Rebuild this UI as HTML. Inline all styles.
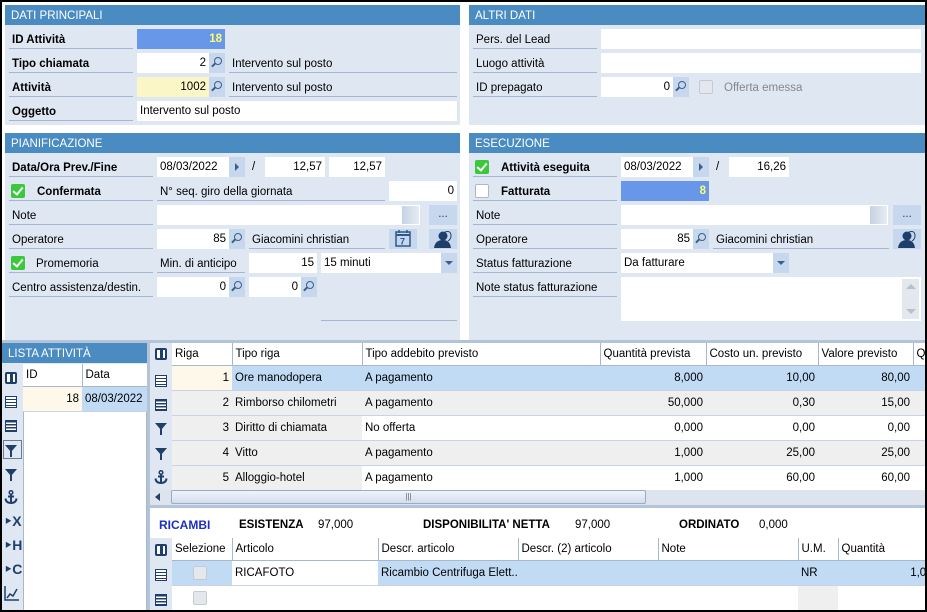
<!DOCTYPE html>
<html><head><meta charset="utf-8"><style>
*{box-sizing:border-box;margin:0;padding:0}
body{width:927px;height:612px;overflow:hidden;background:#fff;font-family:"Liberation Sans",Tahoma,sans-serif;font-size:11.5px;color:#000;position:relative}
div,span{position:absolute}
.frame{left:0;top:0;width:927px;height:612px;border:2px solid #000;z-index:50;pointer-events:none}
.pan{background:#dfe7f2}
.hd{background:#4a8bc2;color:#fff;font-size:11.5px;height:20px;line-height:23px;padding-left:6px}
.l{height:20px;line-height:23px;border-bottom:1px solid #a4b6d0;padding-left:3px;white-space:nowrap}
.bold{font-weight:bold}
.f{background:#fff;height:20px;line-height:21px;padding:0 3px;text-align:right;white-space:nowrap}
.fl{text-align:left}
.b{background:#c7d8ee;height:20px;width:16px}
.mag::after{content:"";position:absolute;left:5px;top:4px;width:6px;height:6px;border:1.3px solid #3a5f8a;border-radius:50%}
.mag::before{content:"";position:absolute;left:2px;top:11px;width:5px;height:1.5px;background:#3a5f8a;transform:rotate(-45deg)}
.arr::after{content:"";position:absolute;left:6px;top:6px;border-left:4px solid #3a5f8a;border-top:4px solid transparent;border-bottom:4px solid transparent}
.dd::after{content:"";position:absolute;left:4px;top:8px;border-top:4px solid #3a5f8a;border-left:4px solid transparent;border-right:4px solid transparent}
.ck{width:14px;height:14px;background:#3cc83c;border-radius:2px}
.ck::after{content:"";position:absolute;left:4px;top:1px;width:4px;height:8px;border:solid #fff;border-width:0 2px 2px 0;transform:rotate(40deg)}
.cke{width:14px;height:14px;background:#fff;border:1px solid #b0b8c4;border-radius:2px}
.g{border-collapse:collapse;position:absolute;table-layout:fixed;font-size:11.5px}
.g td{height:25px;border-bottom:1px solid #c8d4e4;padding:0 3px;white-space:nowrap;overflow:hidden;line-height:20px;vertical-align:middle}
.g tr.h td{height:22px;line-height:18px;background:#fff;border-right:1px solid #a8b8cc;border-bottom:1px solid #a8b8cc}
.r{text-align:right}
.sel{background:#c1dbf5}
.gr{background:#efefef}
.cr{background:#fdf8ea}
.ic{width:12px;height:12px;left:5px}
.lst{border:1.5px solid #1f3f6a;background:repeating-linear-gradient(#fff 0 2px,#1f3f6a 2px 3px)}
.fun{border-top:7px solid #1f3f6a;border-left:6px solid transparent;border-right:6px solid transparent;width:12px;height:0}
.fun::after{content:"";position:absolute;left:-1px;top:-1px;width:2px;height:6px;background:#1f3f6a}
.ig{font-weight:bold;color:#1f3f6a;font-size:14px;left:4px}
</style></head><body>
<div class="frame"></div>

<!-- DATI PRINCIPALI -->
<div class="pan" style="left:5px;top:5px;width:455px;height:120px"></div>
<div class="hd" style="left:5px;top:5px;width:455px">DATI PRINCIPALI</div>
<div class="l bold" style="left:9px;top:29px;width:124px">ID Attività</div>
<div class="f bold" style="left:137px;top:29px;width:88px;background:#6896e8;color:#ffff66">18</div>
<div class="l bold" style="left:9px;top:53px;width:124px">Tipo chiamata</div>
<div class="f" style="left:137px;top:53px;width:72px">2</div><div class="b mag" style="left:209px;top:53px"></div>
<div class="l" style="left:229px;top:53px;width:228px">Intervento sul posto</div>
<div class="l bold" style="left:9px;top:77px;width:124px">Attività</div>
<div class="f" style="left:137px;top:77px;width:72px;background:#fbf6c6">1002</div><div class="b mag" style="left:209px;top:77px"></div>
<div class="l" style="left:229px;top:77px;width:228px">Intervento sul posto</div>
<div class="l bold" style="left:9px;top:101px;width:124px">Oggetto</div>
<div class="f fl" style="left:137px;top:101px;width:320px">Intervento sul posto</div>

<!-- ALTRI DATI -->
<div class="pan" style="left:469px;top:5px;width:456px;height:120px"></div>
<div class="hd" style="left:469px;top:5px;width:456px">ALTRI DATI</div>
<div class="l" style="left:473px;top:29px;width:124px">Pers. del Lead</div>
<div class="f" style="left:601px;top:29px;width:320px"></div>
<div class="l" style="left:473px;top:53px;width:124px">Luogo attività</div>
<div class="f" style="left:601px;top:53px;width:320px"></div>
<div class="l" style="left:473px;top:77px;width:124px">ID prepagato</div>
<div class="f" style="left:601px;top:77px;width:72px">0</div><div class="b mag" style="left:673px;top:77px"></div>
<div class="cke" style="left:699px;top:80px;background:#e4e7ec;border-color:#c4cad4"></div>
<span style="left:724px;top:82px;color:#888">Offerta emessa</span>

<!-- PIANIFICAZIONE -->
<div class="pan" style="left:5px;top:133px;width:455px;height:208px"></div>
<div class="hd" style="left:5px;top:133px;width:455px">PIANIFICAZIONE</div>
<div class="l bold" style="left:9px;top:157px;width:144px">Data/Ora Prev./Fine</div>
<div class="f fl" style="left:157px;top:157px;width:72px">08/03/2022</div><div class="b arr" style="left:229px;top:157px"></div>
<span style="left:252px;top:161px">/</span>
<div class="f" style="left:265px;top:157px;width:60px">12,57</div>
<div class="f" style="left:329px;top:157px;width:56px">12,57</div>
<div class="l" style="left:9px;top:181px;width:144px"></div>
<div class="ck" style="left:11px;top:184px"></div>
<span class="bold" style="left:37px;top:186px">Confermata</span>
<div class="l" style="left:157px;top:181px;width:228px">N° seq. giro della giornata</div>
<div class="f" style="left:389px;top:181px;width:68px">0</div>
<div class="l" style="left:9px;top:205px;width:144px">Note</div>
<div class="f" style="left:157px;top:205px;width:263px"></div>
<div style="left:402px;top:206px;width:17px;height:18px;background:linear-gradient(90deg,#c6d2e2,#e6ecf4)"></div>
<div style="left:429px;top:205px;width:28px;height:20px;background:#c7d8ee;text-align:center;line-height:18px;color:#1f3f6a">...</div>
<div class="l" style="left:9px;top:229px;width:144px">Operatore</div>
<div class="f" style="left:157px;top:229px;width:72px">85</div><div class="b mag" style="left:229px;top:229px"></div>
<div class="l" style="left:249px;top:229px;width:136px">Giacomini christian</div>
<div style="left:389px;top:229px;width:28px;height:20px;background:#c7d8ee"><svg width="28" height="20"><rect x="7" y="3" width="14" height="14" fill="none" stroke="#2d5a8c" stroke-width="1.5"/><line x1="7" y1="6" x2="21" y2="6" stroke="#2d5a8c" stroke-width="2"/><line x1="10" y1="1" x2="10" y2="4" stroke="#2d5a8c" stroke-width="1.5"/><line x1="18" y1="1" x2="18" y2="4" stroke="#2d5a8c" stroke-width="1.5"/><text x="11" y="15.5" font-size="9" font-weight="bold" fill="#2d5a8c" font-family="Liberation Sans">7</text></svg></div>
<div style="left:429px;top:229px;width:28px;height:20px;background:#c7d8ee"><svg width="28" height="20"><circle cx="14" cy="7" r="4.5" fill="#1f3f6a"/><path d="M5 19 Q6 11 14 11 Q21 11 22 19Z" fill="#1f3f6a"/><path d="M16 3 Q22 1 22 7 Q22 10 19 12" fill="none" stroke="#1f3f6a"/></svg></div>
<div class="l" style="left:9px;top:253px;width:144px"></div>
<div class="ck" style="left:11px;top:256px"></div>
<span style="left:36px;top:258px">Promemoria</span>
<div class="l" style="left:157px;top:253px;width:88px">Min. di anticipo</div>
<div class="f" style="left:249px;top:253px;width:68px">15</div>
<div class="f fl" style="left:321px;top:253px;width:120px">15 minuti</div><div class="b dd" style="left:441px;top:253px"></div>
<div class="l" style="left:9px;top:277px;width:144px">Centro assistenza/destin.</div>
<div class="f" style="left:157px;top:277px;width:72px">0</div><div class="b mag" style="left:229px;top:277px"></div>
<div class="f" style="left:249px;top:277px;width:52px">0</div><div class="b mag" style="left:301px;top:277px"></div>
<div style="left:321px;top:320px;width:136px;height:1px;background:#a4b6d0"></div>

<!-- ESECUZIONE -->
<div class="pan" style="left:469px;top:133px;width:456px;height:208px"></div>
<div class="hd" style="left:469px;top:133px;width:456px">ESECUZIONE</div>
<div class="l" style="left:473px;top:157px;width:144px"></div>
<div class="ck" style="left:475px;top:160px"></div>
<span class="bold" style="left:501px;top:162px">Attività eseguita</span>
<div class="f fl" style="left:621px;top:157px;width:72px">08/03/2022</div><div class="b arr" style="left:693px;top:157px"></div>
<span style="left:716px;top:161px">/</span>
<div class="f" style="left:729px;top:157px;width:60px">16,26</div>
<div class="l" style="left:473px;top:181px;width:144px"></div>
<div class="cke" style="left:475px;top:184px"></div>
<span class="bold" style="left:501px;top:186px">Fatturata</span>
<div class="f bold" style="left:621px;top:181px;width:88px;background:#6896e8;color:#ffff66">8</div>
<div class="l" style="left:473px;top:205px;width:144px">Note</div>
<div class="f" style="left:621px;top:205px;width:267px"></div>
<div style="left:870px;top:206px;width:17px;height:18px;background:linear-gradient(90deg,#c6d2e2,#e6ecf4)"></div>
<div style="left:893px;top:205px;width:28px;height:20px;background:#c7d8ee;text-align:center;line-height:18px;color:#1f3f6a">...</div>
<div class="l" style="left:473px;top:229px;width:144px">Operatore</div>
<div class="f" style="left:621px;top:229px;width:72px">85</div><div class="b mag" style="left:693px;top:229px"></div>
<div class="l" style="left:713px;top:229px;width:176px">Giacomini christian</div>
<div style="left:893px;top:229px;width:28px;height:20px;background:#c7d8ee"><svg width="28" height="20"><circle cx="14" cy="7" r="4.5" fill="#1f3f6a"/><path d="M5 19 Q6 11 14 11 Q21 11 22 19Z" fill="#1f3f6a"/><path d="M16 3 Q22 1 22 7 Q22 10 19 12" fill="none" stroke="#1f3f6a"/></svg></div>
<div class="l" style="left:473px;top:253px;width:144px">Status fatturazione</div>
<div class="f fl" style="left:621px;top:253px;width:152px">Da fatturare</div><div class="b dd" style="left:773px;top:253px"></div>
<div class="l" style="left:473px;top:277px;width:144px">Note status fatturazione</div>
<div class="f" style="left:621px;top:277px;width:300px;height:44px"></div>
<div style="left:902px;top:279px;width:17px;height:40px;background:#e3e8ef"></div>
<div style="left:906px;top:284px;border-bottom:5px solid #b7c0cc;border-left:5px solid transparent;border-right:5px solid transparent"></div>
<div style="left:906px;top:309px;border-top:5px solid #b7c0cc;border-left:5px solid transparent;border-right:5px solid transparent"></div>

<!-- bottom area -->
<div style="left:0;top:340px;width:927px;height:3px;background:#b3c4d8"></div>
<div style="left:0;top:343px;width:150px;height:269px;background:#dfe7f2"></div>
<div class="hd" style="left:0;top:343px;width:148px;padding-left:8px">LISTA ATTIVITÀ</div>
<div style="left:23px;top:364px;width:124px;height:248px;background:#fff;border:1px solid #a8b8cc"></div>
<table class="g" style="left:23px;top:364px;width:124px"><colgroup><col style="width:59px"><col style="width:65px"></colgroup>
<tr class="h"><td>ID</td><td>Data</td></tr>
<tr><td class="r cr">18</td><td class="sel">08/03/2022</td></tr></table>
<div style="left:147px;top:343px;width:3px;height:269px;background:#b3c4d8"></div>

<!-- left icons -->
<div class="ic" style="top:372px;border:2px solid #1f3f6a;border-radius:2px;background:linear-gradient(90deg,#fff 3px,#1f3f6a 3px 6px,#fff 6px)"></div>
<div class="ic lst" style="top:396px"></div>
<div class="ic lst" style="top:420px;background:repeating-linear-gradient(#1f3f6a 0 1.5px,#fff 1.5px 3px)"></div>
<div style="left:3px;top:440px;width:19px;height:19px;border:1px solid #6a7a90"></div>
<div class="fun" style="left:5px;top:445px"></div>
<div class="fun" style="left:5px;top:469px"></div>
<div style="left:4px;top:490px"><svg width="14" height="14"><circle cx="7" cy="2.5" r="1.8" fill="none" stroke="#1f3f6a" stroke-width="1.5"/><path d="M7 4V13M4 6.5H10M1.5 8.5Q2 13 7 13Q12 13 12.5 8.5" fill="none" stroke="#1f3f6a" stroke-width="2"/></svg></div>
<span class="ig" style="top:513px">‣X</span>
<span class="ig" style="top:537px">‣H</span>
<span class="ig" style="top:561px">‣C</span>
<div style="left:4px;top:585px"><svg width="16" height="16"><path d="M1 1V15H15" fill="none" stroke="#1f3f6a" stroke-width="1.5"/><path d="M3 13L6 9L9 11L13 4" fill="none" stroke="#1f3f6a" stroke-width="1.5"/></svg></div>

<!-- main grid -->
<div style="left:150px;top:343px;width:777px;height:269px;background:#dfe7f2"></div>
<div style="left:172px;top:343px;width:755px;height:162px;background:#fff"></div>
<table class="g" style="left:172px;top:343px;width:770px"><colgroup><col style="width:60px"><col style="width:130px"><col style="width:238px"><col style="width:106px"><col style="width:112px"><col style="width:95px"><col style="width:29px"></colgroup>
<tr class="h"><td>Riga</td><td>Tipo riga</td><td>Tipo addebito previsto</td><td>Quantità prevista</td><td>Costo un. previsto</td><td>Valore previsto</td><td>Q</td></tr>
<tr><td class="r cr">1</td><td class="sel">Ore manodopera</td><td class="sel">A pagamento</td><td class="r sel">8,000</td><td class="r sel">10,00</td><td class="r sel">80,00</td><td class="sel"></td></tr>
<tr><td class="r gr">2</td><td class="gr">Rimborso chilometri</td><td class="gr">A pagamento</td><td class="r gr">50,000</td><td class="r gr">0,30</td><td class="r gr">15,00</td><td class="gr"></td></tr>
<tr><td class="r gr">3</td><td class="gr">Diritto di chiamata</td><td>No offerta</td><td class="r">0,000</td><td class="r">0,00</td><td class="r">0,00</td><td></td></tr>
<tr><td class="r gr">4</td><td class="gr">Vitto</td><td class="gr">A pagamento</td><td class="r gr">1,000</td><td class="r gr">25,00</td><td class="r gr">25,00</td><td class="gr"></td></tr>
<tr><td class="r gr">5</td><td class="gr">Alloggio-hotel</td><td>A pagamento</td><td class="r">1,000</td><td class="r">60,00</td><td class="r">60,00</td><td></td></tr></table>
<div style="left:150px;top:490px;width:777px;height:15px;background:#dde4ee"></div>
<div style="left:155px;top:493px;border-right:5px solid #1f3f6a;border-top:4px solid transparent;border-bottom:4px solid transparent"></div>
<div style="left:171px;top:490px;width:475px;height:14px;background:linear-gradient(#f0f4fa,#d3deec);border:1px solid #98acc6;border-radius:2px;text-align:center;font-size:8px;line-height:12px;color:#667">|||</div>
<div style="left:150px;top:505px;width:777px;height:3px;background:#b3c4d8"></div>
<div style="left:150px;top:508px;width:777px;height:104px;background:#fff"></div>
<span class="bold" style="left:159px;top:518px;color:#1c2fc0;font-size:12px">RICAMBI</span>
<span class="bold" style="left:239px;top:519px">ESISTENZA</span><span style="left:318px;top:519px">97,000</span>
<span class="bold" style="left:423px;top:519px">DISPONIBILITA' NETTA</span><span style="left:575px;top:519px">97,000</span>
<span class="bold" style="left:679px;top:519px">ORDINATO</span><span style="left:759px;top:519px">0,000</span>
<div style="left:150px;top:538px;width:22px;height:74px;background:#dfe7f2"></div>
<table class="g" style="left:172px;top:538px;width:770px"><colgroup><col style="width:60px"><col style="width:146px"><col style="width:140px"><col style="width:140px"><col style="width:140px"><col style="width:40px"><col style="width:104px"></colgroup>
<tr class="h"><td>Selezione</td><td>Articolo</td><td>Descr. articolo</td><td>Descr. (2) articolo</td><td>Note</td><td>U.M.</td><td>Quantità</td></tr>
<tr><td class="sel"></td><td>RICAFOTO</td><td class="sel">Ricambio Centrifuga Elett...</td><td class="sel"></td><td class="sel"></td><td class="sel">NR</td><td class="r sel">1,000</td></tr>
<tr><td></td><td></td><td></td><td></td><td></td><td class="gr"></td><td></td></tr></table>
<div class="cke" style="left:193px;top:566px;background:#e4e7ec;border-color:#c4cad4"></div>
<div class="cke" style="left:193px;top:591px;background:#e4e7ec;border-color:#c4cad4"></div>

<!-- grid icons -->
<div class="ic" style="left:155px;top:348px;border:2px solid #1f3f6a;border-radius:2px;background:linear-gradient(90deg,#fff 3px,#1f3f6a 3px 6px,#fff 6px)"></div>
<div class="ic lst" style="left:155px;top:375px"></div>
<div class="ic lst" style="left:155px;top:399px;background:repeating-linear-gradient(#1f3f6a 0 1.5px,#fff 1.5px 3px)"></div>
<div class="fun" style="left:155px;top:423px"></div>
<div class="fun" style="left:155px;top:448px"></div>
<div style="left:154px;top:470px"><svg width="14" height="14"><circle cx="7" cy="2.5" r="1.8" fill="none" stroke="#1f3f6a" stroke-width="1.5"/><path d="M7 4V13M4 6.5H10M1.5 8.5Q2 13 7 13Q12 13 12.5 8.5" fill="none" stroke="#1f3f6a" stroke-width="2"/></svg></div>
<div class="ic" style="left:155px;top:544px;border:2px solid #1f3f6a;border-radius:2px;background:linear-gradient(90deg,#fff 3px,#1f3f6a 3px 6px,#fff 6px)"></div>
<div class="ic lst" style="left:155px;top:569px"></div>
<div class="ic lst" style="left:155px;top:594px;background:repeating-linear-gradient(#1f3f6a 0 1.5px,#fff 1.5px 3px)"></div>
</body></html>
